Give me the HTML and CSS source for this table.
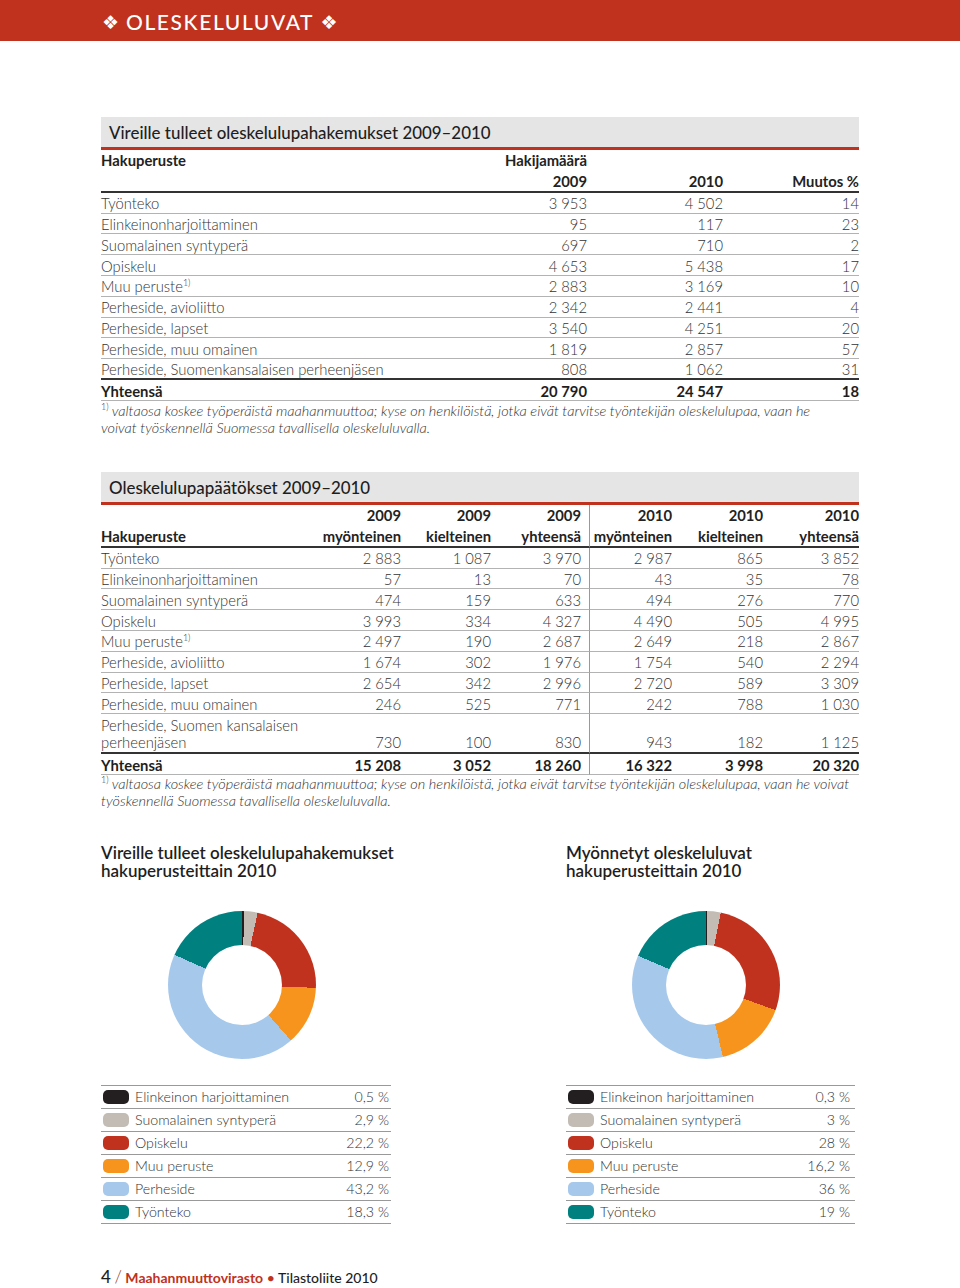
FILE: index.html
```html
<!DOCTYPE html>
<html lang="fi">
<head>
<meta charset="utf-8">
<title>Oleskeluluvat</title>
<link rel="stylesheet" href="styles.css">
</head>
<body>
<header class="topbar"><span class="orn">❖</span> OLESKELULUVAT <span class="orn">❖</span></header>

<main class="page">
  <section class="block block-1">
    <h2 class="bar-title">Vireille tulleet oleskelulupahakemukset 2009–2010</h2>
    <table class="t1">
      <colgroup><col class="c-label"><col class="c-num"><col class="c-num"><col class="c-num"></colgroup>
      <thead>
        <tr class="hrow"><th class="l">Hakuperuste</th><th>Hakijamäärä</th><th></th><th></th></tr>
        <tr class="hrow hlast"><th></th><th>2009</th><th>2010</th><th>Muutos %</th></tr>
      </thead>
      <tbody>
        <tr><td class="l">Työnteko</td><td>3 953</td><td>4 502</td><td>14</td></tr>
        <tr><td class="l">Elinkeinonharjoittaminen</td><td>95</td><td>117</td><td>23</td></tr>
        <tr><td class="l">Suomalainen syntyperä</td><td>697</td><td>710</td><td>2</td></tr>
        <tr><td class="l">Opiskelu</td><td>4 653</td><td>5 438</td><td>17</td></tr>
        <tr><td class="l">Muu peruste<sup>1)</sup></td><td>2 883</td><td>3 169</td><td>10</td></tr>
        <tr><td class="l">Perheside, avioliitto</td><td>2 342</td><td>2 441</td><td>4</td></tr>
        <tr><td class="l">Perheside, lapset</td><td>3 540</td><td>4 251</td><td>20</td></tr>
        <tr><td class="l">Perheside, muu omainen</td><td>1 819</td><td>2 857</td><td>57</td></tr>
        <tr class="pre"><td class="l">Perheside, Suomenkansalaisen perheenjäsen</td><td>808</td><td>1 062</td><td>31</td></tr>
        <tr class="total"><td class="l">Yhteensä</td><td>20 790</td><td>24 547</td><td>18</td></tr>
      </tbody>
    </table>
    <p class="note"><sup>1)</sup> valtaosa koskee työperäistä maahanmuuttoa; kyse on henkilöistä, jotka eivät tarvitse työntekijän oleskelulupaa, vaan he<br>voivat työskennellä Suomessa tavallisella oleskeluluvalla.</p>
  </section>

  <section class="block block-2">
    <h2 class="bar-title">Oleskelulupapäätökset 2009–2010</h2>
    <table class="t2">
      <colgroup><col class="k0"><col class="k1"><col class="k2"><col class="k3"><col class="k4"><col class="k5"><col class="k6"></colgroup>
      <thead>
        <tr class="hrow"><th class="l"></th><th>2009</th><th>2009</th><th class="div">2009</th><th>2010</th><th>2010</th><th>2010</th></tr>
        <tr class="hrow hlast"><th class="l">Hakuperuste</th><th>myönteinen</th><th>kielteinen</th><th class="div">yhteensä</th><th>myönteinen</th><th>kielteinen</th><th>yhteensä</th></tr>
      </thead>
      <tbody>
        <tr><td class="l">Työnteko</td><td>2 883</td><td>1 087</td><td class="div">3 970</td><td>2 987</td><td>865</td><td>3 852</td></tr>
        <tr><td class="l">Elinkeinonharjoittaminen</td><td>57</td><td>13</td><td class="div">70</td><td>43</td><td>35</td><td>78</td></tr>
        <tr><td class="l">Suomalainen syntyperä</td><td>474</td><td>159</td><td class="div">633</td><td>494</td><td>276</td><td>770</td></tr>
        <tr><td class="l">Opiskelu</td><td>3 993</td><td>334</td><td class="div">4 327</td><td>4 490</td><td>505</td><td>4 995</td></tr>
        <tr><td class="l">Muu peruste<sup>1)</sup></td><td>2 497</td><td>190</td><td class="div">2 687</td><td>2 649</td><td>218</td><td>2 867</td></tr>
        <tr><td class="l">Perheside, avioliitto</td><td>1 674</td><td>302</td><td class="div">1 976</td><td>1 754</td><td>540</td><td>2 294</td></tr>
        <tr><td class="l">Perheside, lapset</td><td>2 654</td><td>342</td><td class="div">2 996</td><td>2 720</td><td>589</td><td>3 309</td></tr>
        <tr><td class="l">Perheside, muu omainen</td><td>246</td><td>525</td><td class="div">771</td><td>242</td><td>788</td><td>1 030</td></tr>
        <tr class="tall pre"><td class="l">Perheside, Suomen kansalaisen<br>perheenjäsen</td><td>730</td><td>100</td><td class="div">830</td><td>943</td><td>182</td><td>1 125</td></tr>
        <tr class="total"><td class="l">Yhteensä</td><td>15 208</td><td>3 052</td><td class="div">18 260</td><td>16 322</td><td>3 998</td><td>20 320</td></tr>
      </tbody>
    </table>
    <p class="note"><sup>1)</sup> valtaosa koskee työperäistä maahanmuuttoa; kyse on henkilöistä, jotka eivät tarvitse työntekijän oleskelulupaa, vaan he voivat<br>työskennellä Suomessa tavallisella oleskeluluvalla.</p>
  </section>

  <section class="charts">
    <div class="chart chart-a">
      <h3 class="chart-title">Vireille tulleet oleskelulupahakemukset<br>hakuperusteittain 2010</h3>
      <div class="donut donut-a"></div>
      <ul class="legend">
        <li><span class="sw sw-black"></span><span class="lt">Elinkeinon harjoittaminen</span><span class="lv">0,5 %</span></li>
        <li><span class="sw sw-gray"></span><span class="lt">Suomalainen syntyperä</span><span class="lv">2,9 %</span></li>
        <li><span class="sw sw-red"></span><span class="lt">Opiskelu</span><span class="lv">22,2 %</span></li>
        <li><span class="sw sw-orange"></span><span class="lt">Muu peruste</span><span class="lv">12,9 %</span></li>
        <li><span class="sw sw-blue"></span><span class="lt">Perheside</span><span class="lv">43,2 %</span></li>
        <li><span class="sw sw-teal"></span><span class="lt">Työnteko</span><span class="lv">18,3 %</span></li>
      </ul>
    </div>
    <div class="chart chart-b">
      <h3 class="chart-title">Myönnetyt oleskeluluvat<br>hakuperusteittain 2010</h3>
      <div class="donut donut-b"></div>
      <ul class="legend">
        <li><span class="sw sw-black"></span><span class="lt">Elinkeinon harjoittaminen</span><span class="lv">0,3 %</span></li>
        <li><span class="sw sw-gray"></span><span class="lt">Suomalainen syntyperä</span><span class="lv">3 %</span></li>
        <li><span class="sw sw-red"></span><span class="lt">Opiskelu</span><span class="lv">28 %</span></li>
        <li><span class="sw sw-orange"></span><span class="lt">Muu peruste</span><span class="lv">16,2 %</span></li>
        <li><span class="sw sw-blue"></span><span class="lt">Perheside</span><span class="lv">36 %</span></li>
        <li><span class="sw sw-teal"></span><span class="lt">Työnteko</span><span class="lv">19 %</span></li>
      </ul>
    </div>
  </section>

  <footer class="foot"><span class="pg">4</span> <span class="slash">/</span> <span class="org">Maahanmuuttovirasto</span> <span class="dot">•</span> <span class="pub">Tilastoliite 2010</span></footer>
</main>
</body>
</html>
```

FILE: styles.css
```css
* { box-sizing: border-box; }
html, body { margin: 0; padding: 0; background: #fff; }
body {
  font-family: Lato, "Open Sans", "DejaVu Sans", sans-serif;
  color: #2b2b2b;
  width: 960px;
}

.topbar {
  height: 41px;
  background: #c0321e;
  color: #fff;
  font-size: 21px;
  font-weight: 500;
  letter-spacing: 1.6px;
  line-height: 41px;
  padding-left: 102px;
  padding-top: 1px;
}
.orn { font-family: "DejaVu Sans", sans-serif; font-size: 19px; letter-spacing: 0; position: relative; top: -1px; }

.page { padding: 0 101px; }

.block-1 { margin-top: 76px; }
.block-2 { margin-top: 36px; }

.bar-title {
  margin: 0;
  height: 33px;
  background: #e5e5e5;
  border-bottom: 3px solid #c0321e;
  font-size: 16.9px;
  font-weight: 500;
  color: #1e1e1e;
  line-height: 31px;
  padding-left: 8px;
}

table { border-collapse: separate; border-spacing: 0; width: 100%; table-layout: fixed; }
th, td {
  padding: 0;
  height: 20.8px;
  line-height: 18px;
  font-size: 14.8px;
  text-align: right;
  white-space: nowrap;
  vertical-align: middle;
}
td { font-weight: 300; color: #333; border-bottom: 1px solid #b3b3b3; padding-top: 1px; }
th { font-weight: 700; color: #222; }
.l { text-align: left; }
.hlast th { border-bottom: 2px solid #333; height: 22px; }
tr.pre td { border-bottom: 2px solid #333; }
tr.total td { font-weight: 700; color: #1e1e1e; }
sup { font-size: 9px; line-height: 0; vertical-align: 6px; font-weight: 300; }

.t1 .c-label { width: 350px; }
.t1 .c-num { width: 136px; }

.t2 .k0 { width: 209px; }
.t2 .k1 { width: 91px; }
.t2 .k2 { width: 90px; }
.t2 .k3 { width: 99px; }
.t2 .k4 { width: 82px; }
.t2 .k5 { width: 91px; }
.t2 .k6 { width: 96px; }
.t2 .div { border-right: 1px solid #999; padding-right: 8px; }
.t2 tr.tall td { height: 40px; line-height: 17px; vertical-align: bottom; padding-bottom: 1px; }

.note {
  margin: 0;
  font-size: 14.5px;
  font-style: italic;
  font-weight: 300;
  line-height: 17px;
  color: #333;
}
.block-1 .note { margin-top: 1px; }
.note sup { font-style: normal; }

.charts { display: flex; margin-top: 35px; }
.chart-a { width: 465px; flex: none; }
.chart-b { flex: 1; }
.chart-title {
  margin: 0;
  font-size: 17px;
  font-weight: 600;
  line-height: 18px;
  color: #1e1e1e;
}
.donut {
  width: 148px; height: 148px;
  border-radius: 50%;
  margin: 31px 0 0 67px;
  position: relative;
}
.chart-b .donut { margin-left: 66px; }
.donut::after {
  content: "";
  position: absolute;
  left: 34px; top: 34px;
  width: 80px; height: 80px;
  border-radius: 50%;
  background: #fff;
}
.donut-a {
  background: conic-gradient(#231f20 0deg 1.8deg, #c2bcb5 1.8deg 12.2deg, #c0321e 12.2deg 92.2deg, #f7941d 92.2deg 138.6deg, #a6c8eb 138.6deg 294.1deg, #00807f 294.1deg 360deg);
}
.donut-b {
  background: conic-gradient(#231f20 0deg 1.1deg, #c2bcb5 1.1deg 11.6deg, #c0321e 11.6deg 109.9deg, #f7941d 109.9deg 166.8deg, #a6c8eb 166.8deg 293.3deg, #00807f 293.3deg 360deg);
}

.legend {
  list-style: none;
  margin: 26px 0 0;
  padding: 0;
  width: 290px;
  border-top: 1px solid #999;
}
.chart-b .legend { width: 289px; }
.legend li {
  display: flex;
  align-items: center;
  height: 23px;
  border-bottom: 1px solid #999;
  font-size: 14.2px;
  font-weight: 300;
  color: #333;
}
.sw { width: 26px; height: 14px; border-radius: 5px; margin: 0 6px 0 2px; flex: none; }
.lt { flex: 1; }
.lv { padding-right: 2px; }
.chart-b .lv { padding-right: 5px; }
.sw-black { background: #231f20; }
.sw-gray { background: #c2bcb5; }
.sw-red { background: #c0321e; }
.sw-orange { background: #f7941d; }
.sw-blue { background: #a6c8eb; }
.sw-teal { background: #00807f; }

.foot {
  margin-top: 44px;
  font-size: 14px;
  line-height: 18px;
  color: #1e1e1e;
  font-weight: 500;
}
.foot .pg { font-size: 17px; }
.foot .slash { color: #8a3a30; font-size: 17px; font-weight: 300; }
.foot .org { color: #c0321e; font-weight: 700; }
.foot .dot { color: #c0321e; }
```
